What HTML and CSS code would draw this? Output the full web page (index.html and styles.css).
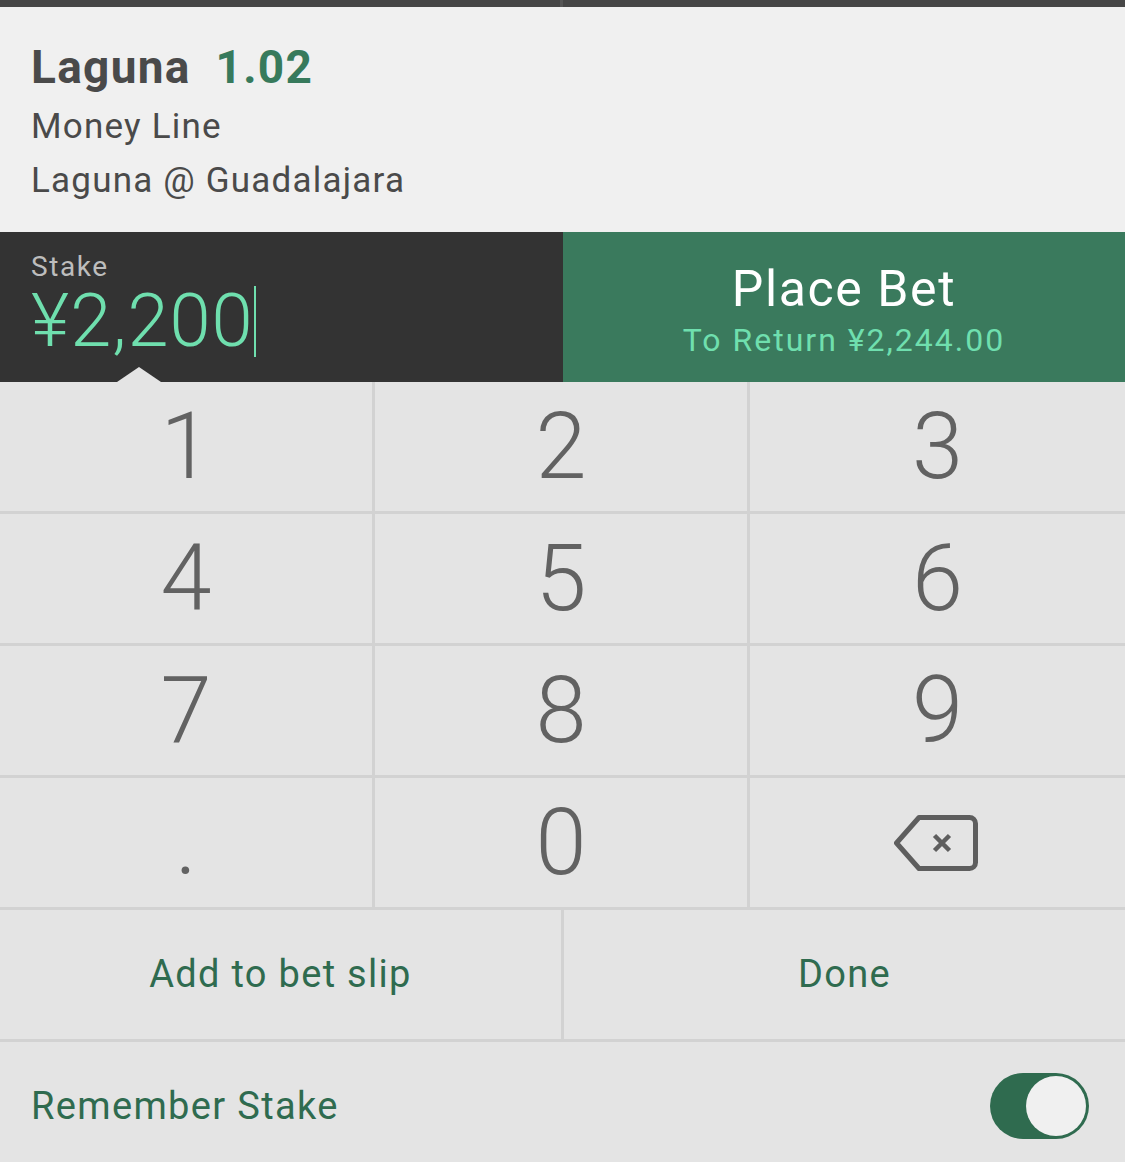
FILE: index.html
```html
<!DOCTYPE html>
<html lang="en">
  <head>
    <meta charset="UTF-8" />
    <meta name="viewport" content="width=device-width, initial-scale=1.0" />
    <title>Bet Slip</title>
    <link rel="stylesheet" href="styles.css">
  </head>
  <body>
    <div class="topbar">
      <div class="topbar-left"></div>
      <div class="topbar-right"></div>
    </div>

    <div class="selection">
      <div class="selection-title">
        <span class="team">Laguna</span>
        <span class="odds">1.02</span>
      </div>
      <div class="selection-line">Money Line</div>
      <div class="selection-line">Laguna @ Guadalajara</div>
    </div>

    <div class="stake-bar">
      <div class="stake">
        <div class="stake-label">Stake</div>
        <div class="stake-amount">¥2,200<span class="caret"></span></div>
        <div class="pointer"></div>
      </div>
      <button class="place-bet">
        <span class="place-title">Place Bet</span>
        <span class="place-return">To Return ¥2,244.00</span>
      </button>
    </div>

    <div class="keypad">
      <button class="key">1</button>
      <button class="key">2</button>
      <button class="key">3</button>
      <button class="key">4</button>
      <button class="key">5</button>
      <button class="key">6</button>
      <button class="key">7</button>
      <button class="key">8</button>
      <button class="key">9</button>
      <button class="key">.</button>
      <button class="key">0</button>
      <button class="key key-delete">
        <svg width="84" height="56" viewBox="0 0 84 56">
          <path d="M2.5 28 L25 2.5 H75.5 a6 6 0 0 1 6 6 V47.5 a6 6 0 0 1 -6 6 H25 Z"
            fill="none" stroke="#5e5e5e" stroke-width="5" stroke-linejoin="round" />
          <path d="M40.5 20.5 L55.5 35.5 M55.5 20.5 L40.5 35.5"
            stroke="#5e5e5e" stroke-width="4.5" />
        </svg>
      </button>
    </div>

    <div class="actions">
      <button class="action">Add to bet slip</button>
      <button class="action">Done</button>
    </div>

    <div class="remember">
      <span class="remember-label">Remember Stake</span>
      <div class="toggle on"><div class="knob"></div></div>
    </div>
  </body>
</html>
```

FILE: styles.css
```css
body {
  margin: 0;
  width: 1125px;
  height: 1162px;
  overflow: hidden;
  background-color: #e4e4e4;
  font-family: Roboto, "Liberation Sans", sans-serif;
}
button {
  border: none;
  margin: 0;
  padding: 0;
  font-family: inherit;
  cursor: pointer;
}
.topbar {
  display: flex;
  height: 7px;
  gap: 3px;
  background-color: #555;
}
.topbar-left {
  width: 560px;
  background-color: #464646;
}
.topbar-right {
  flex: 1;
  background-color: #464646;
}
.selection {
  box-sizing: border-box;
  height: 225px;
  padding: 32px 32px 0 31px;
  background-color: #f0f0f0;
  color: #4a4a4a;
}
.selection-title {
  font-size: 46px;
  font-weight: bold;
  line-height: 56px;
  letter-spacing: 1.3px;
  margin-bottom: 5px;
}
.odds {
  color: #377a5c;
  margin-left: 12px;
}
.selection-line {
  font-size: 35px;
  line-height: 54px;
  letter-spacing: 1.2px;
}
.stake-bar {
  display: flex;
  height: 150px;
}
.stake {
  position: relative;
  box-sizing: border-box;
  width: 563px;
  padding: 21px 32px 0 31px;
  background-color: #333;
}
.stake-label {
  font-size: 28px;
  line-height: 28px;
  letter-spacing: 1.6px;
  color: #bdbdbd;
  margin-bottom: 3px;
}
.stake-amount {
  font-size: 74px;
  font-weight: 300;
  line-height: 70px;
  letter-spacing: 1px;
  color: #6fdfae;
  padding-top: 2px;
}
.caret {
  display: inline-block;
  width: 2px;
  height: 71px;
  margin-left: 0;
  vertical-align: -11px;
  background-color: #6fdfae;
}
.pointer {
  position: absolute;
  left: 117px;
  bottom: 0;
  width: 0;
  height: 0;
  border-left: 22px solid transparent;
  border-right: 22px solid transparent;
  border-bottom: 15px solid #e4e4e4;
}
.place-bet {
  flex: 1;
  display: flex;
  flex-direction: column;
  align-items: center;
  padding-top: 32px;
  background-color: #3a7a5d;
}
.place-title {
  font-size: 50px;
  line-height: 50px;
  letter-spacing: 1.6px;
  color: #fff;
  margin-bottom: 10px;
}
.place-return {
  font-size: 32px;
  line-height: 32px;
  letter-spacing: 2px;
  color: #6fdfae;
}
.keypad {
  display: grid;
  grid-template-columns: 372px 372px 1fr;
  grid-auto-rows: 129px;
  gap: 3px;
  padding-bottom: 3px;
  background-color: #d2d2d2;
}
.key {
  display: flex;
  align-items: center;
  justify-content: center;
  font-size: 92px;
  font-weight: 300;
  line-height: 129px;
  color: #626262;
  background-color: #e4e4e4;
}
.key-delete svg {
  display: block;
  margin-left: -3px;
}
.actions {
  display: grid;
  grid-template-columns: 1fr 1fr;
  grid-auto-rows: 129px;
  gap: 3px;
  padding-bottom: 3px;
  background-color: #d2d2d2;
}
.action {
  font-size: 38px;
  line-height: 129px;
  letter-spacing: 1.3px;
  color: #2f6b4f;
  background-color: #e4e4e4;
}
.remember {
  display: flex;
  align-items: center;
  justify-content: space-between;
  box-sizing: border-box;
  height: 120px;
  padding: 7px 36px 0 31px;
}
.remember-label {
  font-size: 38px;
  line-height: 38px;
  letter-spacing: 1.35px;
  color: #2f6b4f;
}
.toggle {
  position: relative;
  width: 99px;
  height: 66px;
  border-radius: 33px;
  background-color: #ccc;
}
.toggle.on {
  background-color: #2f6b4f;
}
.knob {
  position: absolute;
  top: 3px;
  right: 3px;
  width: 60px;
  height: 60px;
  border-radius: 50%;
  background-color: #f0f0f0;
}
```
